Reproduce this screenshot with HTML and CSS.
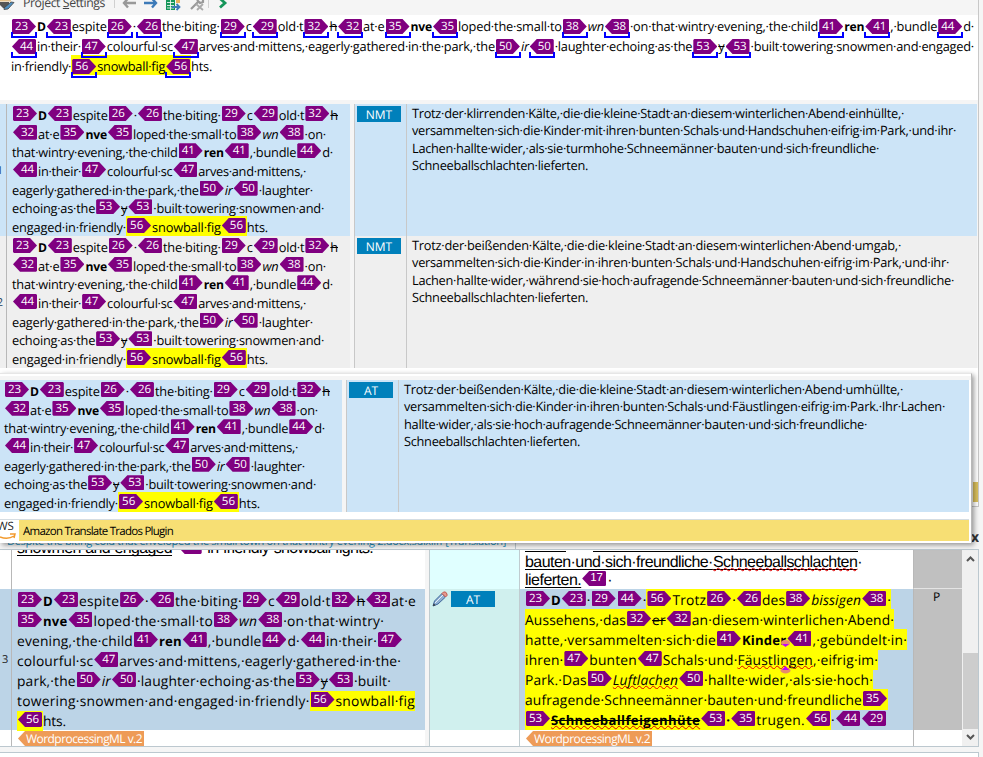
FILE: index.html
```html
<!DOCTYPE html>
<html lang="en">
<head>
<meta charset="utf-8">
<title>Translation editor</title>
<link rel="stylesheet" href="styles.css">
</head>
<body>
<div class="app">
  <header class="toolbar">
    <svg class="ico-settings" width="16" height="15" viewBox="0 0 16 15"><path d="M0 2h9v3L6 8H3L0 5z" fill="#555"/><path d="M0 0h11v1.500H0z" fill="#e3c08a"/><path d="M4 8l7-6 3 .5-6 6.500-4 .5z" fill="#4f8fc0" stroke="#444" stroke-width=".8"/></svg>
    <span class="toolbar-label" data-fit="82">Project <u>S</u>ettings</span>
    <i class="sep"></i>
    <svg class="ico-back" width="15" height="10" viewBox="0 0 15 10"><path d="M6 -1.500L2 3l4 4.500M2 3h12" fill="none" stroke="#999" stroke-width="2.400"/></svg>
    <svg class="ico-next" width="15" height="10" viewBox="0 0 15 10"><path d="M8 -1.500L12 3l-4 4.500M12 3H0" fill="none" stroke="#3d7ab8" stroke-width="2.400"/></svg>
    <svg class="ico-grid" width="16" height="12" viewBox="0 0 16 12"><path d="M0 0h9v10H0z" fill="#16965a"/><path d="M1 2.500h7M1 5.500h7M1 8h7" stroke="#fff" stroke-width=".8"/><path d="M4.500 0v10" stroke="#fff" stroke-width=".8"/><path d="M10 0h4v3h-4z" fill="#e8b35d"/><path d="M6 7h7M10.500 4l3 3-3 3" fill="none" stroke="#3d7ab8" stroke-width="1.800"/></svg>
    <svg class="ico-tools" width="15" height="12" viewBox="0 0 15 12"><path d="M1 9l8-8M7 0l3 3 3-1V0" fill="none" stroke="#999" stroke-width="2.200"/><path d="M6 4l7 6M13 4l-6 6" stroke="#aaa" stroke-width="1.800"/></svg>
    <i class="sep sep2"></i>
    <svg class="ico-go" width="9" height="10" viewBox="0 0 9 10"><path d="M1 -1.500L6 3 1 7.500" fill="none" stroke="#16965a" stroke-width="2.800"/></svg>
  </header>

  <section class="query"><div class="lines marked" data-block="query"></div></section>

  <section class="results">
    <div class="result selected">
      <div class="num">1</div><div class="src"><div class="lines" data-block="source"></div></div>
      <div class="gap"></div><div class="kind"><span class="badge">NMT</span></div>
      <div class="tgt"><div class="lines" data-block="nmt1"></div></div>
    </div>
    <div class="result">
      <div class="num">2</div><div class="src"><div class="lines" data-block="source"></div></div>
      <div class="gap"></div><div class="kind"><span class="badge">NMT</span></div>
      <div class="tgt"><div class="lines" data-block="nmt2"></div></div>
    </div>
    <div class="results-rest"><div class="provider-edge"></div></div>
  </section>

  <div class="tabs"><span class="tab"><span class="tab-text" data-fit="499">Despite the biting cold that enveloped the small town on that wintry evening 2.docx.sdlxliff [Translation]</span></span><span class="tab-close">x</span></div>

  <main class="editor">
    <div class="segment previous">
      <div class="num"></div>
      <div class="src"><div class="lines arial" data-block="prevSource"></div></div>
      <div class="gap"></div><div class="kind"></div>
      <div class="tgt"><div class="rules"><i></i><i></i></div><div class="lines arial" data-block="prevTarget"></div></div>
      <div class="role"></div>
    </div>
    <div class="segment active">
      <div class="num">3</div>
      <div class="src"><div class="lines" data-block="activeSource"></div></div>
      <div class="gap"></div>
      <div class="kind">
        <svg width="16" height="16" viewBox="0 0 16 16"><path d="M1 15l1.500-5L10 2.500l3.500 3.500L6 13z" fill="#8eb0d3" stroke="#41679a"/><path d="M3 12l8-8" stroke="#e5eef8"/><path d="M10 2.500l1.500-1.500h2L15 3v1.500L13.500 6z" fill="#e39a90" stroke="#c4574c"/><path d="M1 15l.8-2.500 1.700 1.700z" fill="#333"/></svg>
        <span class="badge">AT</span>
      </div>
      <div class="tgt"><div class="lines" data-block="activeTarget"></div>
        <svg class="handle" width="11" height="34" viewBox="0 0 11 34"><ellipse cx="5.500" cy="3" rx="4.500" ry="3" fill="#e88c6c"/><path d="M2 4h7L5.500 7z" fill="#c000ff"/><ellipse cx="5.500" cy="30.500" rx="5" ry="3" fill="#e88c6c"/><path d="M2 30h7L5.500 26z" fill="#c000ff"/></svg>
      </div>
      <div class="role">P</div>
    </div>
    <div class="segment format">
      <div class="num"></div><div class="src"><span class="ml"><span data-fit="116">WordprocessingML v.2</span></span></div>
      <div class="gap"></div><div class="kind"></div>
      <div class="tgt"><span class="ml"><span data-fit="116">WordprocessingML v.2</span></span></div><div class="role"></div>
    </div>
    <div class="scrollbar">
      <svg width="9" height="6" viewBox="0 0 9 6"><path d="M1 5l3.500-3.500L8 5" fill="none" stroke="#555" stroke-width="2"/></svg>
      <div class="thumb"></div>
      <svg width="9" height="6" viewBox="0 0 9 6"><path d="M1 1l3.500 3.500L8 1" fill="none" stroke="#555" stroke-width="2"/></svg>
    </div>
  </main>
  <footer class="panel-edge"></footer>

  <aside class="popup">
    <div class="popup-head"></div>
    <div class="result selected">
      <div class="src"><div class="lines" data-block="source"></div></div>
      <div class="gap"></div><div class="kind"><span class="badge">AT</span></div>
      <div class="tgt"><div class="lines" data-block="at"></div></div>
    </div>
    <div class="provider">
      <div class="logo"><span>WS</span><svg width="17" height="7" viewBox="0 0 17 7"><path d="M0 4q8 3 14-1M10 1l5 0-1 4" fill="none" stroke="#f29a2e" stroke-width="1.500"/></svg></div>
      <div class="provider-name"><span data-fit="150">Amazon Translate Trados Plugin</span></div>
    </div>
  </aside>
</div>
<script src="segments.js"></script>
</body>
</html>
```
FILE: styles.css
```css
* { box-sizing: border-box; }
body { margin: 0; }
.app {
  position: relative;
  width: 983px;
  height: 757px;
  overflow: hidden;
  background: #f5f5f5;
  color: #000;
  font-family: "Open Sans", "Noto Sans", sans-serif;
  font-size: 13px;
  text-rendering: geometricPrecision;
}

/* toolbar */
.toolbar { display: flex; align-items: flex-start; width: 979px; height: 15px; border-right: 1px solid #c8c8c8; overflow: hidden; }
.toolbar-label { flex: none; margin: -6px 0 0 7px; font-size: 12.300px; line-height: 17px; white-space: nowrap; color: #444; }
.sep { flex: none; width: 1px; height: 8px; margin-left: 9px; background: #d0d0d0; }
.sep2 { margin-left: 3px; }
.ico-back { margin-left: 7px; }
.ico-next { margin-left: 7px; }
.ico-grid { margin-left: 7px; }
.ico-tools { margin-left: 8px; }
.ico-go { margin-left: 10px; }

/* text lines and inline tags */
.lines { font-size: 12.800px; }
.line { display: block; width: max-content; height: var(--pitch); line-height: var(--pitch); white-space: pre; }
.line b { font-size: .95em; line-height: 1; }
.tag { position: relative; display: inline-block; width: 26px; height: 15px; margin-top: -4px; vertical-align: -1px; overflow: hidden; letter-spacing: 0; }
.tag span {
  display: block; width: 24px; height: 15px; margin-left: 1px; padding-left: 3px;
  background: #800080; color: #fff; font-size: 11.500px; font-weight: 400; font-style: normal; line-height: 15px;
  clip-path: polygon(1px 0, 17px 0, 24px 7.5px, 17px 15px, 1px 15px, 0 14px, 0 1px);
}
.tag.close span { padding-left: 8px; clip-path: polygon(7px 0, 23px 0, 24px 1px, 24px 14px, 23px 15px, 7px 15px, 0 7.5px); }
.marked .tag { height: 19px; margin-bottom: -4px; vertical-align: -3px; }
.marked .tag::after { content: ""; position: absolute; left: 0; right: 0; bottom: 0; height: 4px; border: 2px solid #0000ff; border-top: 0; }
.hl { background: #ffff00; padding: 2px 0 0; }
.st { text-decoration: line-through; }
.ul { text-decoration: underline; text-decoration-thickness: 1px; text-underline-offset: 2px; text-decoration-skip-ink: none; }
.sp { text-decoration: underline wavy #e00000 0.5px; text-underline-offset: 0; text-decoration-skip-ink: none; }

/* looked-up sentence */
.query { width: 979px; height: 85px; padding: 1px 0 0 11px; background: #fff; border-right: 1px solid #c8c8c8; --pitch: 20px; }

/* lookup results */
.results { width: 979px; height: 407px; padding-top: 4px; border-right: 1px solid #c8c8c8; border-bottom: 1px solid #c8c8c8; }
.result { display: flex; width: 977px; height: 132px; background: #efefef; }
.result.selected { background: #cce4f7; }
.num { flex: none; width: 7px; display: flex; align-items: center; border-right: 1px solid #b8b8b8; font-size: 11px; color: #204060; }
.results .num { justify-content: flex-end; padding-right: 3px; }
.result .src { flex: none; width: 343px; padding: 2px 0 0 5px; --pitch: 18.670px; }
.gap { flex: none; width: 4px; background: #f5f5f5; }
.result .kind { flex: none; width: 53px; padding: 2px 0 0 2px; border-left: 1px solid #c8c8c8; border-right: 1px solid #c8c8c8; }
.result .tgt { flex: 1; padding: 1px 0 0 5px; --pitch: 17.330px; }
.badge { display: block; width: 44px; height: 16px; background: #0080bb; color: #fff; text-align: center; font-size: 12px; line-height: 17px; }
.results-rest { display: flex; justify-content: flex-end; height: 138px; padding-top: 114px; background: #fff; }
.provider-edge { width: 5px; height: 20px; background: #d9bf5d; }

/* document tab */
.tabs { display: flex; justify-content: space-between; width: 979px; height: 43px; padding-top: 30px; overflow: hidden; border-bottom: 1px solid #bcc8cf; }
.tab { width: 516px; height: 13px; padding-left: 7px; border-right: 1px solid #bcc8cf; }
.tab-text { display: block; width: max-content; margin-top: -1px; font-size: 11px; line-height: 12px; color: #168fc0; white-space: nowrap; }
.tab-close { font: bold 14px/10px "Open Sans", sans-serif; margin-top: -4px; color: #333; }

/* editor */
.editor {
  display: grid; grid-template-columns: 962px 16px; grid-template-rows: 39px 141px 16px;
  width: 979px; height: 197px; background: #fff; border-right: 1px solid #bcc8cf; border-bottom: 1px solid #bcc8cf;
}
.segment { grid-column: 1; display: flex; min-height: 0; }
.editor .num { width: 12px; }
.editor .src { flex: none; width: 413px; padding-left: 5px; }
.editor .kind { flex: none; display: flex; width: 91px; border-left: 1px solid #c0ccd0; border-right: 1px solid #c0ccd0; }
.editor .tgt { position: relative; flex: none; width: 393px; padding-left: 5px; }
.editor .role { flex: none; width: 49px; border-left: 1px solid #b8b8b8; background: #c0c0c0; }
.previous { overflow: hidden; }
.previous .src { --pitch: 18px; }
.previous .src .lines { margin-top: -10px; }
.previous .kind { background: #e0ffff; }
.arial { font-family: "Liberation Sans", Arial, sans-serif; font-size: 16px; }
.previous .tgt { --pitch: 18px; padding-top: 1px; }
.previous .tgt .lines { margin-top: 2px; }
.rules { display: flex; gap: 27px; height: 1px; }
.rules i { width: 41px; background: #000; }
.rules i + i { width: 265px; }
.previous .role { border-bottom: 1px solid #e4e4e4; }
.active .lines { font-size: 13.800px; --pitch: 20px; }
.active .hl { padding: 1px 0 0; }
.active .num { padding-left: 2px; background: #bcd4e7; font-size: 11px; color: #222; }
.active .src { padding-top: 3px; background: #bcd4e7; }
.active .kind { padding: 2px 0 0 2px; background: #d0f0ee; }
.active .kind .badge { margin-left: 3px; }
.active .tgt { padding-top: 2px; background: #bcd4e7; }
.active .tgt .hl { padding: 2px 0 0; }
.active .role { padding-right: 3px; text-align: center; font-size: 12px; line-height: 16px; }
.handle { position: absolute; left: 260px; top: 51px; }
.format .role { background: #fff; }
.ml {
  display: block; width: 127px; height: 15px; margin: 1px 0 0 1px; padding-left: 8px; background: #ee9b57; color: #fff;
  font-size: 12px; line-height: 16px; white-space: nowrap; clip-path: polygon(7px 0, 126px 0, 126px 15px, 7px 15px, 0 7.5px);
}
.scrollbar { grid-column: 2; grid-row: 1 / 4; display: flex; flex-direction: column; align-items: center; padding: 6px 0; background: #f0f0f0; }
.scrollbar .thumb { width: 15px; height: 76px; margin: 91px 0 auto; background: #cdcdcd; }
.panel-edge { width: 979px; height: 5px; margin-top: 5px; background: #fff; border: 1px solid #bcc8cf; border-width: 1px 1px 0 0; }

/* overlay with one more lookup result */
.popup { position: absolute; left: 0; top: 373px; width: 972px; height: 170px; background: #fff; border-top: 1px solid #e6e6e6; border-right: 1px solid #b8b8b8; box-shadow: 2px 2px 5px rgba(0, 0, 0, .4); }
.popup-head { height: 6px; border-top: 2px solid #fff; background: #f5f5f5; }
.popup .result { width: 969px; }
.popup .src { width: 342px; padding-left: 4px; }
.provider { display: flex; width: 969px; height: 22px; margin-top: 7px; border-top: 1px solid #d5dde3; background: #f7df74; }
.logo { width: 19px; background: #fff; font-size: 11.500px; line-height: 13px; color: #222; overflow: hidden; }
.logo span { display: block; height: 13px; margin-left: -3px; }
.logo svg { display: block; }
.provider-name { padding-left: 4px; font-size: 11.500px; line-height: 23px; white-space: nowrap; }
```
FILE: segments.js
```js
// Markup: {n> opening tag, <n} closing tag, *bold*, /italic/, ~strike~, _underline_, ^misspelt^, [highlight]
// Each line is [text, width in px]; spaces are drawn as middle dots.
const blocks = {
  query: [
    ["{23>*D*<23}espite{26> <26}the biting {29>c<29}old t{32>~h~<32}at e{35>*nve*<35}loped the small to{38>/wn/<38} on that wintry evening, the child{41>*ren*<41}, bundle{44>d ", 963],
    ["<44}in their {47>colourful sc<47}arves and mittens, eagerly gathered in the park, the{50>/ir/<50} laughter echoing as the{53>~y~<53} built towering snowmen and engaged ", 963],
    ["in friendly [{56>snowball fig<56}]hts.", 201]
  ],
  source: [
    ["{23>*D*<23}espite{26> <26}the biting {29>c<29}old t{32>~h~", 326],
    ["<32}at e{35>*nve*<35}loped the small to{38>/wn/<38} on ", 314],
    ["that wintry evening, the child{41>*ren*<41}, bundle{44>d ", 321],
    ["<44}in their {47>colourful sc<47}arves and mittens, ", 294],
    ["eagerly gathered in the park, the{50>/ir/<50} laughter ", 301],
    ["echoing as the{53>~y~<53} built towering snowmen and ", 312],
    ["engaged in friendly [{56>snowball fig<56}]hts.", 256]
  ],
  nmt1: [
    ["Trotz der klirrenden Kälte, die die kleine Stadt an diesem winterlichen Abend einhüllte, ", 492],
    ["versammelten sich die Kinder mit ihren bunten Schals und Handschuhen eifrig im Park, und ihr ", 544],
    ["Lachen hallte wider, als sie turmhohe Schneemänner bauten und sich freundliche ", 467],
    ["Schneeballschlachten lieferten.", 176]
  ],
  nmt2: [
    ["Trotz der beißenden Kälte, die die kleine Stadt an diesem winterlichen Abend umgab, ", 489],
    ["versammelten sich die Kinder in ihren bunten Schals und Handschuhen eifrig im Park, und ihr ", 537],
    ["Lachen hallte wider, während sie hoch aufragende Schneemänner bauten und sich freundliche ", 542],
    ["Schneeballschlachten lieferten.", 176]
  ],
  at: [
    ["Trotz der beißenden Kälte, die die kleine Stadt an diesem winterlichen Abend umhüllte, ", 499],
    ["versammelten sich die Kinder in ihren bunten Schals und Fäustlingen eifrig im Park. Ihr Lachen ", 541],
    ["hallte wider, als sie hoch aufragende Schneemänner bauten und sich freundliche ", 463],
    ["Schneeballschlachten lieferten.", 176]
  ],
  prevSource: [["_snowmen and engaged_ <17} in friendly snowball fights.", 356]],
  prevTarget: [
    ["_bauten und sich freundliche ^Schneeballschlachten^_ ", 337],
    ["_lieferten._<17} ", 87]
  ],
  activeSource: [
    ["{23>*D*<23}espite{26> <26}the biting {29>c<29}old t{32>~h~<32}at e", 399],
    ["{35>*nve*<35}loped the small to{38>/wn/<38} on that wintry ", 367],
    ["evening, the child{41>*ren*<41}, bundle{44>d <44}in their {47>", 386],
    ["colourful sc<47}arves and mittens, eagerly gathered in the ", 384],
    ["park, the{50>/ir/<50} laughter echoing as the{53>~y~<53} built ", 374],
    ["towering snowmen and engaged in friendly [{56>snowball fig]", 398],
    ["[<56}]hts.", 49]
  ],
  activeTarget: [
    ["{23>*D*<23} {29>{44> [{56>Trotz{26> <26}des{38>/bissigen/<38} ]", 366],
    ["[Aussehens, das{32>~er~<32}an diesem winterlichen Abend ]", 369],
    ["[hatte, versammelten sich die{41>*Kinder*<41}, gebündelt in ]", 382],
    ["[ihren {47>bunten<47}Schals und ^Fäustlingen^, eifrig im ]", 353],
    ["[Park. Das{50>/^Luftlachen^/<50} hallte wider, als sie hoch ]", 348],
    ["[aufragende Schneemänner bauten und freundliche{35>]", 363],
    ["[{53>*~^Schneeballfeigenhüte^~*<53}* *<35}trugen.<56}] <44}<29}", 362]
  ]
};

const pairs = { "*": "b", "/": "i", "~": "span class='st'", "_": "span class='ul'", "^": "span class='sp'" };

function toHtml(text) {
  const open = {};
  return text.replace(/\{(\d+)>|<(\d+)\}|[*\/~_^\[\] ]/g, (m, o, c) => {
    if (o) return `<span class="tag"><span>${o}</span></span>`;
    if (c) return `<span class="tag close"><span>${c}</span></span>`;
    if (m === " ") return "·";
    if (m === "[") return '<span class="hl">';
    if (m === "]") return "</span>";
    open[m] = !open[m];
    return open[m] ? `<${pairs[m]}>` : `</${pairs[m].split(" ")[0]}>`;
  });
}

// Spread the difference between natural and wanted width over the characters.
function fit(el, width) {
  let count = el.textContent.length;
  el.querySelectorAll(".tag").forEach(t => { count -= t.textContent.length; });
  el.style.letterSpacing = (width - el.getBoundingClientRect().width) / count + "px";
}

document.querySelectorAll("[data-block]").forEach(box => {
  blocks[box.dataset.block].forEach(([text, width]) => {
    const line = document.createElement("div");
    line.className = "line";
    line.innerHTML = toHtml(text);
    box.append(line);
    fit(line, width);
  });
});
document.querySelectorAll("[data-fit]").forEach(el => fit(el, +el.dataset.fit));
```
